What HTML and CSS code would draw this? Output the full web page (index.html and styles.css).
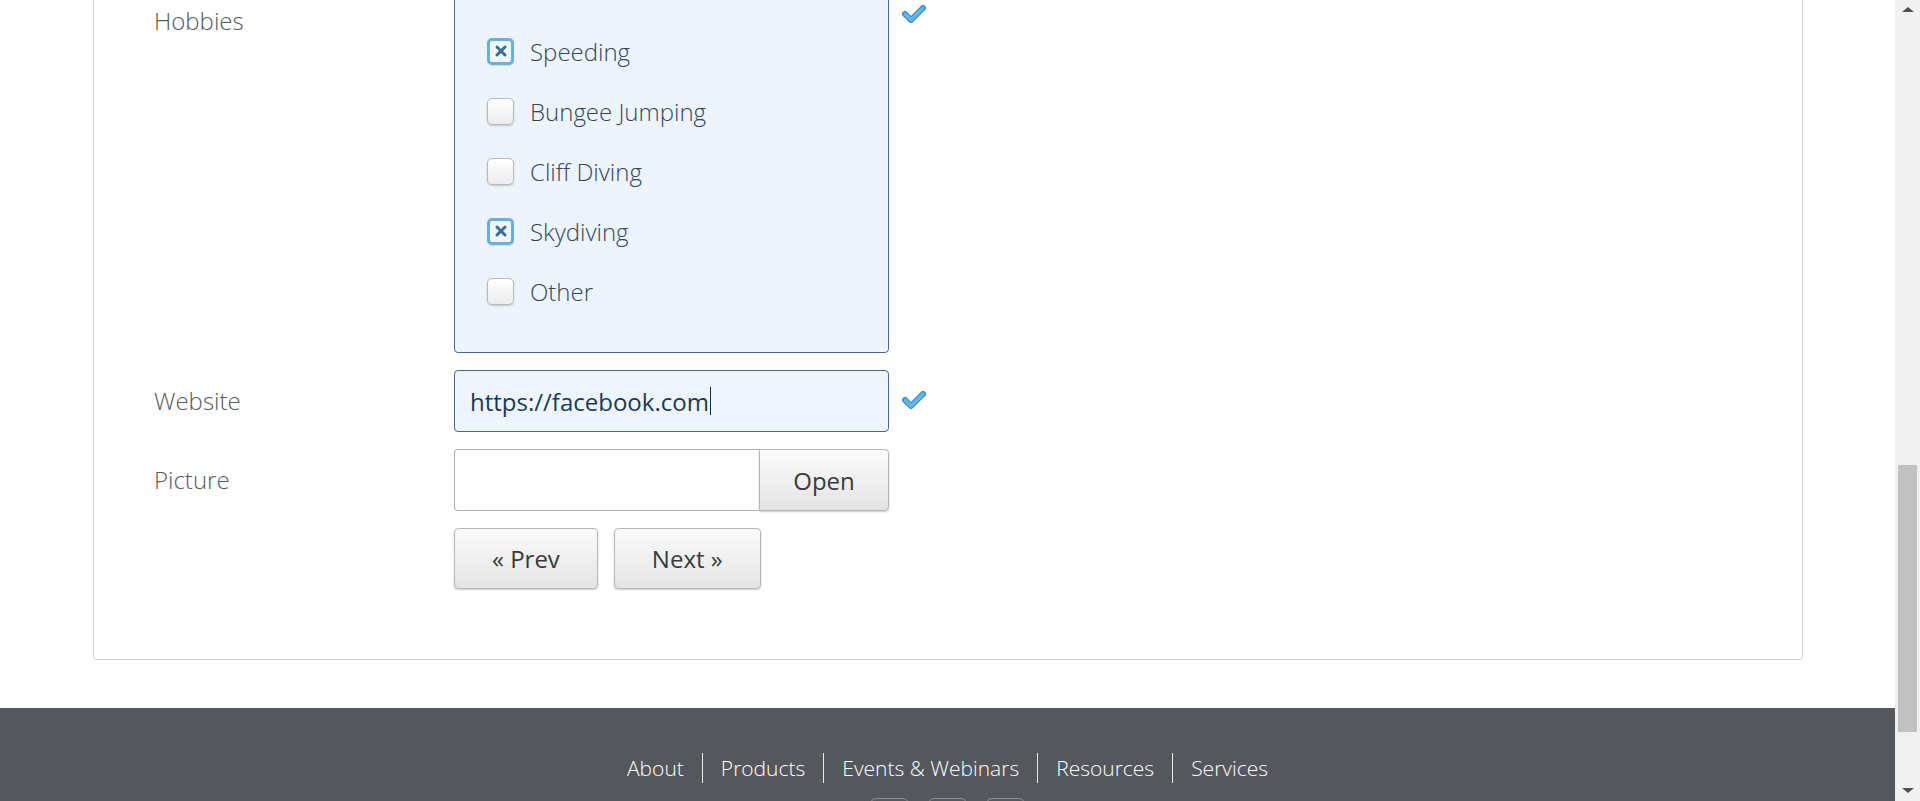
FILE: index.html
```html
<!DOCTYPE html>
<html lang="en">
<head>
<meta charset="utf-8">
<title>Form</title>
<link rel="stylesheet" href="styles.css">
</head>
<body>
<div class="window">
  <div class="viewport">
    <main class="page">
      <section class="card">
        <form class="form">
          <div class="row row-hobbies">
            <div class="label">Hobbies</div>
            <div class="field">
              <div class="checklist">
                <label class="check-item"><span class="cb checked"><svg viewBox="0 0 16 16" width="16" height="16"><path d="M4 4 L12 12 M12 4 L4 12"/></svg></span><span class="check-text">Speeding</span></label>
                <label class="check-item"><span class="cb"></span><span class="check-text">Bungee Jumping</span></label>
                <label class="check-item"><span class="cb"></span><span class="check-text">Cliff Diving</span></label>
                <label class="check-item"><span class="cb checked"><svg viewBox="0 0 16 16" width="16" height="16"><path d="M4 4 L12 12 M12 4 L4 12"/></svg></span><span class="check-text">Skydiving</span></label>
                <label class="check-item"><span class="cb"></span><span class="check-text">Other</span></label>
              </div>
            </div>
            <span class="valid valid-top"><svg viewBox="0 0 24 18" width="24" height="18"><path class="ck-under" d="M3 9 L9 15 L21 3"/><path class="ck-over" d="M3 9 L9 15 L21 3"/></svg></span>
          </div>

          <div class="row">
            <div class="label">Website</div>
            <div class="field">
              <div class="text-input">https://facebook.com<span class="caret"></span></div>
            </div>
            <span class="valid valid-mid"><svg viewBox="0 0 24 18" width="24" height="18"><path class="ck-under" d="M3 9 L9 15 L21 3"/><path class="ck-over" d="M3 9 L9 15 L21 3"/></svg></span>
          </div>

          <div class="row">
            <div class="label">Picture</div>
            <div class="field file-field">
              <div class="file-name"></div>
              <button type="button" class="btn btn-open">Open</button>
            </div>
          </div>

          <div class="row">
            <div class="label"></div>
            <div class="field nav-buttons">
              <button type="button" class="btn btn-nav">« Prev</button>
              <button type="button" class="btn btn-nav">Next »</button>
            </div>
          </div>
        </form>
      </section>
    </main>

    <footer class="footer">
      <nav class="footer-links">
        <a href="#">About</a>
        <a href="#">Products</a>
        <a href="#">Events &amp; Webinars</a>
        <a href="#">Resources</a>
        <a href="#">Services</a>
      </nav>
      <div class="social">
        <span class="social-box"></span>
        <span class="social-box"></span>
        <span class="social-box"></span>
      </div>
    </footer>
  </div>

  <div class="scrollbar">
    <span class="sb-arrow sb-up"></span>
    <div class="sb-track"><div class="sb-thumb"></div></div>
    <span class="sb-arrow sb-down"></span>
  </div>
</div>
</body>
</html>
```

FILE: styles.css
```css
* { box-sizing: border-box; }

html, body {
  margin: 0;
  padding: 0;
  height: 801px;
  overflow: hidden;
  background: #ffffff;
  font-family: "Open Sans", "Liberation Sans", sans-serif;
}

.window {
  display: flex;
  width: 1920px;
  height: 801px;
}

.viewport {
  flex: 1;
  height: 801px;
  overflow: hidden;
  background: #fff;
}

.page {
  padding: 0 92px 0 93px;
  margin-top: -41px;
}

.card {
  border: 1px solid #cfcfcf;
  border-radius: 3px;
  padding: 30px 0 69px 60px;
  background: #fff;
}

.form {
  display: flex;
  flex-direction: column;
  gap: 17px;
}

.row {
  display: flex;
  align-items: flex-start;
}

.label {
  width: 300px;
  flex: none;
  height: 62px;
  line-height: 62px;
  font-size: 24px;
  font-weight: 300;
  color: #555a60;
}

.field {
  width: 435px;
  flex: none;
}

.checklist {
  background: #edf4fc;
  border: 1px solid #46699a;
  border-radius: 4px;
  padding: 30px 0 31px 32px;
}

.check-item {
  display: flex;
  align-items: center;
  height: 60px;
}

.cb {
  width: 27px;
  height: 27px;
  flex: none;
  border: 1px solid #b9b9b9;
  border-radius: 5px;
  background: linear-gradient(#ffffff, #ececec);
  box-shadow: 0 1px 2px rgba(0, 0, 0, 0.18);
  display: flex;
  align-items: center;
  justify-content: center;
}

.cb.checked {
  border: 3px solid #6cb0d8;
  background: #eef5fb;
  box-shadow: 0 1px 1px rgba(0, 0, 0, 0.12);
}

.cb svg { display: block; }

.cb svg path {
  stroke: #3a6e93;
  stroke-width: 3;
  stroke-linecap: round;
  fill: none;
}

.check-text {
  margin-left: 16px;
  font-size: 24px;
  font-weight: 300;
  color: #33475f;
}

.valid {
  margin-left: 13px;
  display: block;
  width: 24px;
  height: 18px;
}

.valid-top { margin-top: 15px; }
.valid-mid { margin-top: 21px; }

.valid svg { display: block; }

.ck-under {
  fill: none;
  stroke: #3a8cc2;
  stroke-width: 6;
  stroke-linecap: round;
  stroke-linejoin: round;
}

.ck-over {
  fill: none;
  stroke: #66b6e6;
  stroke-width: 3.4;
  stroke-linecap: round;
  stroke-linejoin: round;
}

.text-input {
  height: 62px;
  background: #eef5fd;
  border: 1px solid #46699a;
  border-radius: 4px;
  padding: 0 15px;
  display: flex;
  align-items: center;
  font-size: 24px;
  color: #1c3a5a;
}

.caret {
  display: inline-block;
  width: 1px;
  height: 28px;
  background: #1c2a3a;
  margin-left: 1px;
}

.file-field {
  display: flex;
  height: 62px;
}

.file-name {
  flex: 1;
  border: 1px solid #b0b0b0;
  border-right: none;
  border-radius: 4px 0 0 4px;
  background: #fff;
}

.btn {
  font-family: "Open Sans", "Liberation Sans", sans-serif;
  font-size: 24px;
  font-weight: 400;
  color: #3a3a3a;
  background: linear-gradient(#fbfbfb, #e4e4e4);
  border: 1px solid #b8b8b8;
  border-radius: 4px;
  box-shadow: 0 1px 2px rgba(0, 0, 0, 0.2);
  height: 61px;
  padding: 0;
  cursor: pointer;
}

.btn-open {
  width: 130px;
  height: 62px;
  border-radius: 0 4px 4px 0;
  flex: none;
}

.nav-buttons {
  display: flex;
  gap: 16px;
}

.btn-nav {
  padding: 0 37px;
}

.footer {
  margin-top: 48px;
  background: #54575c;
  height: 200px;
  padding-top: 45px;
}

.footer-links {
  display: flex;
  justify-content: center;
  align-items: center;
}

.footer-links a {
  color: #ffffff;
  text-decoration: none;
  font-size: 21px;
  font-weight: 300;
  line-height: 30px;
  padding: 0 18px;
  border-left: 1px solid #e8e8e8;
}

.footer-links a:first-child {
  border-left: none;
}

.social {
  display: flex;
  justify-content: center;
  gap: 19px;
  margin-top: 15px;
}

.social-box {
  width: 39px;
  height: 39px;
  border: 1px solid #8d9094;
  border-radius: 6px;
}

.scrollbar {
  width: 25px;
  flex: none;
  height: 801px;
  background: #f0f0f0;
  display: flex;
  flex-direction: column;
  align-items: center;
}

.sb-arrow {
  width: 0;
  height: 0;
  border-left: 6px solid transparent;
  border-right: 6px solid transparent;
  flex: none;
}

.sb-up {
  border-bottom: 5px solid #505050;
  margin-top: 7px;
}

.sb-down {
  border-top: 5px solid #505050;
  margin-bottom: 8px;
}

.sb-track {
  flex: 1;
  width: 100%;
  padding: 453px 3px 0 3px;
}

.sb-thumb {
  height: 267px;
  background: #c1c1c1;
}
```
